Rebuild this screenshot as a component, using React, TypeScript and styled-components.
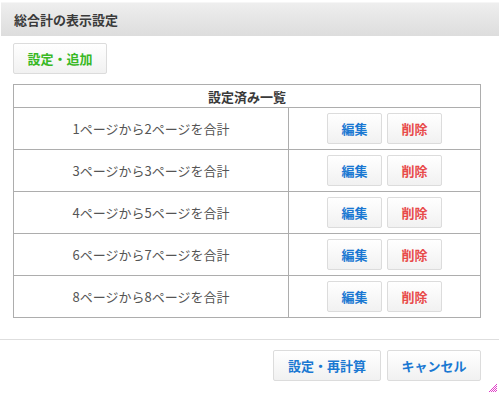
import React from "react";
import styled, { createGlobalStyle } from "styled-components";

const GlobalStyle = createGlobalStyle`
  html, body {
    margin: 0;
    padding: 0;
    background: #fff;
  }
  body {
    font-family: "Noto Sans CJK JP", "Noto Sans", sans-serif;
  }
`;

const Dialog = styled.div`
  position: relative;
  width: 499px;
  height: 393px;
  padding-top: 2px;
  box-sizing: border-box;
  background: #fff;
  overflow: hidden;
`;

const TitleBar = styled.div`
  height: 34px;
  margin-left: 1px;
  display: flex;
  align-items: center;
  padding-left: 13px;
  background: linear-gradient(#eeeeee, #dddddd);
  border-top: 1px solid #f6f6f6;
  box-sizing: border-box;
  font-size: 13px;
  font-weight: bold;
  color: #3a3a3a;
`;

const Body = styled.div`
  padding: 7px 18px 0 13px;
`;

const Button = styled.button<{ $tone: "green" | "blue" | "red"; $width: number }>`
  width: ${(p) => p.$width}px;
  height: 31px;
  padding: 0;
  border: 1px solid #dcdcdc;
  border-radius: 2px;
  background: linear-gradient(#ffffff, #f1f1f1);
  font-family: inherit;
  font-size: 13px;
  font-weight: bold;
  cursor: pointer;
  color: ${(p) =>
    p.$tone === "green" ? "#38b824" : p.$tone === "red" ? "#e84a4a" : "#1a78d2"};
`;

const Table = styled.table`
  margin-top: 10px;
  width: 468px;
  border-collapse: collapse;
  border: 1px solid #adadad;
  font-size: 13px;
  table-layout: fixed;
`;

const HeadCell = styled.th`
  height: 22px;
  padding: 0;
  border: 1px solid #adadad;
  font-weight: bold;
  color: #3a3a3a;
  text-align: center;
`;

const LabelCell = styled.td`
  height: 41px;
  padding: 0;
  border: 1px solid #adadad;
  color: #555;
  text-align: center;
`;

const ActionCell = styled.td`
  padding: 0;
  border: 1px solid #adadad;
`;

const Actions = styled.div`
  display: flex;
  justify-content: center;
  gap: 5px;
`;

const Footer = styled.div`
  margin-top: 21px;
  border-top: 1px solid #dedede;
  display: flex;
  justify-content: flex-end;
  gap: 6px;
  padding: 10px 18px 0 0;
`;

const Grip = styled.svg`
  position: absolute;
  right: 2px;
  bottom: 1px;
`;

const rows = [
  "1ページから2ページを合計",
  "3ページから3ページを合計",
  "4ページから5ページを合計",
  "6ページから7ページを合計",
  "8ページから8ページを合計",
];

export default function App() {
  return (
    <Dialog>
      <GlobalStyle />
      <TitleBar>総合計の表示設定</TitleBar>
      <Body>
        <Button $tone="green" $width={94}>
          設定・追加
        </Button>
        <Table>
          <colgroup>
            <col style={{ width: 275 }} />
            <col />
          </colgroup>
          <thead>
            <tr>
              <HeadCell colSpan={2}>設定済み一覧</HeadCell>
            </tr>
          </thead>
          <tbody>
            {rows.map((r) => (
              <tr key={r}>
                <LabelCell>{r}</LabelCell>
                <ActionCell>
                  <Actions>
                    <Button $tone="blue" $width={55}>
                      編集
                    </Button>
                    <Button $tone="red" $width={55}>
                      削除
                    </Button>
                  </Actions>
                </ActionCell>
              </tr>
            ))}
          </tbody>
        </Table>
      </Body>
      <Footer>
        <Button $tone="blue" $width={108}>
          設定・再計算
        </Button>
        <Button $tone="blue" $width={94}>
          キャンセル
        </Button>
      </Footer>
      <Grip width="8" height="8" viewBox="0 0 8 8">
        <path
          d="M8 0 L0 8 M8 2 L2 8 M8 4 L4 8 M8 6 L6 8"
          stroke="#e040c8"
          strokeWidth="1"
          fill="none"
        />
      </Grip>
    </Dialog>
  );
}
